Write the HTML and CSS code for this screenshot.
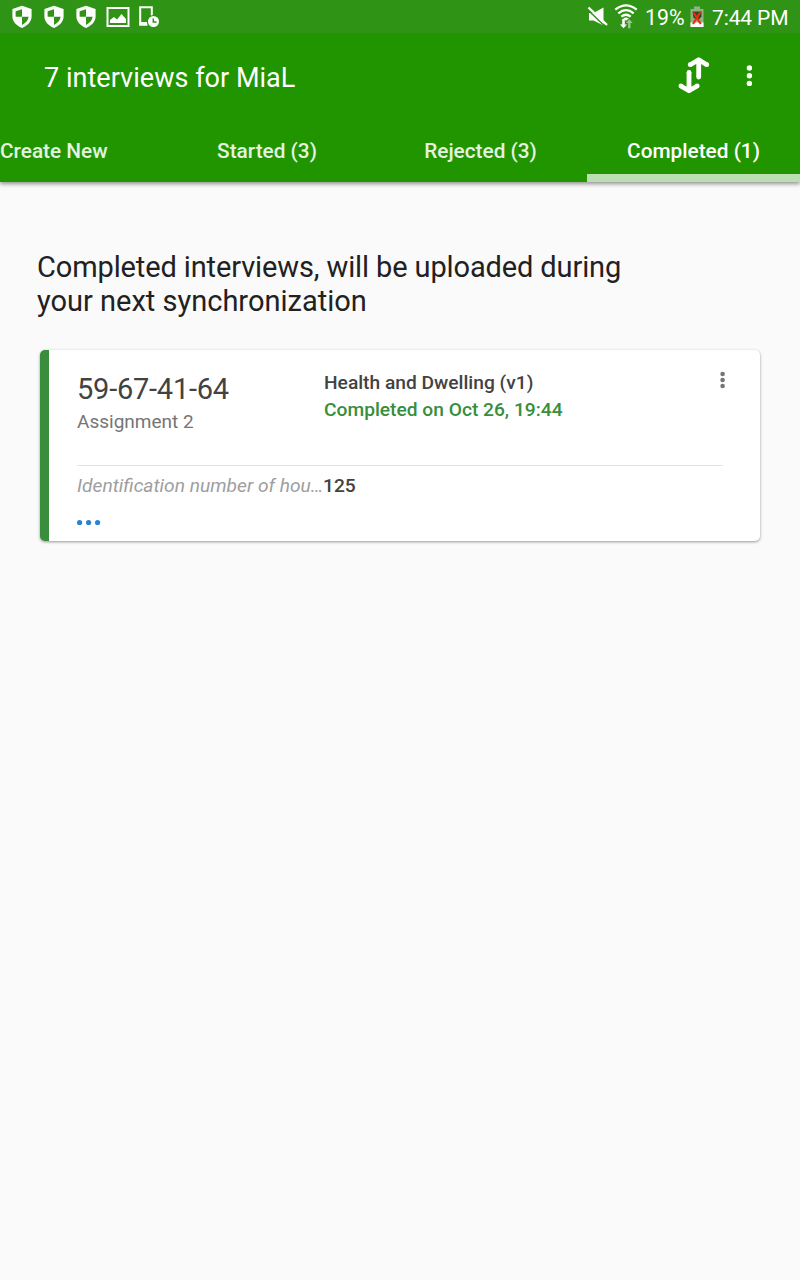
FILE: index.html
```html
<!DOCTYPE html>
<html lang="en">
<head>
<meta charset="utf-8">
<title>Interviews</title>
<link rel="stylesheet" href="styles.css">
</head>
<body>
<svg class="defs" width="0" height="0" aria-hidden="true">
  <symbol id="shield" viewBox="0 0 22 24">
    <path d="M11 .7 20.600 4v7.300c0 5.200-3.700 9.300-9.600 11.700C5.100 20.600 1.400 16.500 1.400 11.300V4z" fill="#fff"/>
    <path d="M11 4.200v7.600H4.600V6.300zM11 11.800h6.600c-.3 3.500-2.800 6.300-6.600 8.200z" fill="#2f9315"/>
  </symbol>
</svg>
<header class="header">
  <div class="status">
    <div class="status-left">
      <svg class="shield"><use href="#shield"/></svg>
      <svg class="shield"><use href="#shield"/></svg>
      <svg class="shield"><use href="#shield"/></svg>
      <svg class="picture" viewBox="0 0 24 20"><rect x="1.500" y="1" width="21" height="18" fill="none" stroke="#fff" stroke-width="2"/><path d="M4 16v-3l4-3 3 2.500L15.500 7 20 12v4z" fill="#fff"/></svg>
      <svg class="device" viewBox="0 0 22 23"><path d="M9.500 19.500H2.200V2.300h11.600V11" fill="none" stroke="#fff" stroke-width="2"/><path d="M1.200 17h8v3.500h-8z" fill="#fff"/><circle cx="15.500" cy="16.500" r="6.600" fill="#2f9315"/><circle cx="15.500" cy="16.500" r="5.500" fill="#fff"/><path d="M15.300 13.500v3.500h3.200" fill="none" stroke="#2f9315" stroke-width="1.500"/></svg>
    </div>
    <div class="status-right">
      <svg class="mute" viewBox="0 0 22 22"><path d="M2 7h4.500L16.500 1.500v18L6.500 14.500H2z" fill="#fff"/><path d="M.5 3.500 18.500 21" stroke="#2f9315" stroke-width="1.500"/><path d="M1.500 1.500 20 19" stroke="#fff" stroke-width="2.400"/></svg>
      <svg class="wifi" viewBox="0 0 24 26"><g fill="none" stroke="#fff" stroke-width="2.200"><path d="M1.300 6.700Q12 -2 22.700 6.700"/><path d="M4.300 10.300Q12 4 19.700 10.300"/><path d="M7.300 13.700Q12 9.800 16.700 13.700"/></g><path d="M9.200 15.500Q12 13.500 14.800 15.500L12 17.800z" fill="#fff"/><path d="M8.200 16h2.600v5.500H13l-3.500 3.800L6 21.500h2.200z" fill="#fff"/><path d="M15.300 16.200 18.700 20h-2.200v5.200h-2.400V20H12z" fill="#96ca8a"/></svg>
      <span class="percent">19%</span>
      <svg class="battery" viewBox="0 0 14 22"><path d="M.5 3H4V.5h6V3h3.500v18H.5z" fill="#8fb386"/><path d="M.5 16.500h13V21H.5z" fill="#fff"/><path d="M2.500 5.500h9v5L8.500 14l-5-2z" fill="#294c24"/><path d="M3.500 6.500 10.800 18M10.800 5.500 3 18" stroke="#f02c0b" stroke-width="2.200"/></svg>
      <span class="clock">7:44 PM</span>
    </div>
  </div>
  <div class="toolbar">
    <h1 class="title">7 interviews for MiaL</h1>
    <svg class="sync" viewBox="0 0 32 40"><path d="M20.700 22V5M12.300 9.700 20.700 4.700l8 5M11 17v17M2.800 31l8.200 4.800 8.200-4.800" fill="none" stroke="#fff" stroke-width="4.800" stroke-linejoin="round"/><g fill="#fff"><circle cx="12.200" cy="9.700" r="2.400"/><circle cx="28.800" cy="9.700" r="2.400"/><circle cx="2.900" cy="30.900" r="2.400"/><circle cx="19.200" cy="30.900" r="2.400"/><circle cx="20.700" cy="22" r="2.400"/><circle cx="11" cy="17.400" r="2.400"/></g></svg>
    <svg class="more" viewBox="0 0 6 22"><g fill="#fff"><circle cx="3.400" cy="3" r="2.700"/><circle cx="3.400" cy="10.700" r="2.700"/><circle cx="3.400" cy="18.400" r="2.700"/></g></svg>
  </div>
  <nav class="tabs">
    <div class="tab tab-first">Create New</div>
    <div class="tab">Started (3)</div>
    <div class="tab">Rejected (3)</div>
    <div class="tab tab-active">Completed (1)</div>
  </nav>
</header>
<main class="content">
  <h2 class="heading"><span class="tight">Completed interviews, will be uploaded during</span><br>your next synchronization</h2>
  <article class="card">
    <div class="summary">
      <div class="identity">
        <div class="key">59-67-41-64</div>
        <div class="assignment">Assignment 2</div>
      </div>
      <div class="info">
        <div class="survey">Health and Dwelling (v1)</div>
        <div class="state">Completed on Oct 26, 19:44</div>
      </div>
      <svg class="card-more" viewBox="0 0 6 18"><g fill="#757575"><circle cx="2.600" cy="3" r="2.300"/><circle cx="2.600" cy="9" r="2.300"/><circle cx="2.600" cy="15" r="2.300"/></g></svg>
    </div>
    <div class="answer"><span class="question">Identification number of hou…</span><span class="value">125</span></div>
    <svg class="dots" viewBox="0 0 24 6"><g fill="#2a82d2"><circle cx="2.600" cy="2.500" r="2.600"/><circle cx="11.600" cy="2.500" r="2.600"/><circle cx="20.600" cy="2.500" r="2.600"/></g></svg>
  </article>
</main>
</body>
</html>
```
FILE: styles.css
```css
* { box-sizing: border-box; }
body { margin: 0; min-height: 1280px; background: #fafafa; font-family: Roboto, sans-serif; color: #212121; }
svg { display: block; flex: none; overflow: visible; }
.defs { position: absolute; }
.header { height: 182px; background: #209500; box-shadow: 0 2px 4px rgba(0,0,0,.42); color: #fff; }
.status { height: 33px; background: #2f9315; display: flex; justify-content: space-between; padding: 0 12px 0 11.400px; }
.status-left { display: flex; align-items: flex-start; padding-top: 5px; }
.shield { width: 22px; height: 24px; margin-right: 10px; }
.picture { width: 24px; height: 20px; margin: 2px 8px 0 -1.400px; }
.device { width: 22px; height: 23px; margin-left: .3px; }
.status-right { display: flex; font-size: 21.300px; line-height: 36px; }
.mute { width: 22px; height: 22px; margin-top: 6px; }
.wifi { width: 24px; height: 26px; margin: 3px 7px 0 5px; }
.percent { width: 45px; white-space: nowrap; }
.battery { width: 14px; height: 22px; margin: 6px 8px 0 0; }
.clock { width: 76px; white-space: nowrap; font-size: 21px; letter-spacing: -.12px; }
.toolbar { height: 86px; display: flex; align-items: flex-start; padding-left: 44px; }
.title { margin: 28px 0 0; width: 634px; font-weight: 400; font-size: 27px; line-height: 34px; letter-spacing: .03px; }
.sync { width: 32px; height: 40px; margin-top: 22px; }
.more { width: 6px; height: 22px; margin: 32px 0 0 36px; }
.tabs { height: 63px; display: grid; grid-template-columns: 160px 214px 213px 213px; grid-template-rows: 63px; font-size: 20.800px; font-weight: 500; line-height: 64px; text-align: center; }
.tab { white-space: nowrap; color: #e4f3e0; height: 63px; }
.tab-first { text-align: left; }
.tab-active { color: #fff; border-bottom: 8px solid #bcdfb2; }
.content { padding: 68px 40px 0; }
.heading { margin: 0 -20px 0 -3px; font-weight: 400; font-size: 29px; line-height: 34px; white-space: nowrap; }
.tight { letter-spacing: -.12px; }
.card { height: 191px; margin-top: 32px; padding-left: 28px; background: #fff; border-left: 9px solid #388e3c; border-radius: 5px; box-shadow: 0 1px 3px rgba(0,0,0,.4); }
.summary { width: 646px; height: 116px; display: flex; border-bottom: 1px solid #e3e3e3; }
.identity { flex: none; width: 247px; }
.key { margin-top: 22px; font-size: 29px; line-height: 34px; letter-spacing: -.23px; color: #424242; }
.assignment { margin-top: 4px; font-size: 19px; line-height: 24px; color: #757575; }
.info { flex: none; width: 395px; padding-top: 19px; font-size: 19.200px; font-weight: 500; line-height: 27px; color: #424242; }
.state { color: #388e3c; }
.card-more { width: 6px; height: 18px; margin: 21px 0 0 .5px; }
.answer { display: flex; font-size: 19.200px; line-height: 24px; margin-top: 8px; }
.question { width: 246px; font-style: italic; color: #9e9e9e; white-space: nowrap; }
.value { font-weight: 500; color: #424242; }
.dots { width: 24px; height: 6px; margin-top: 22px; }
```
